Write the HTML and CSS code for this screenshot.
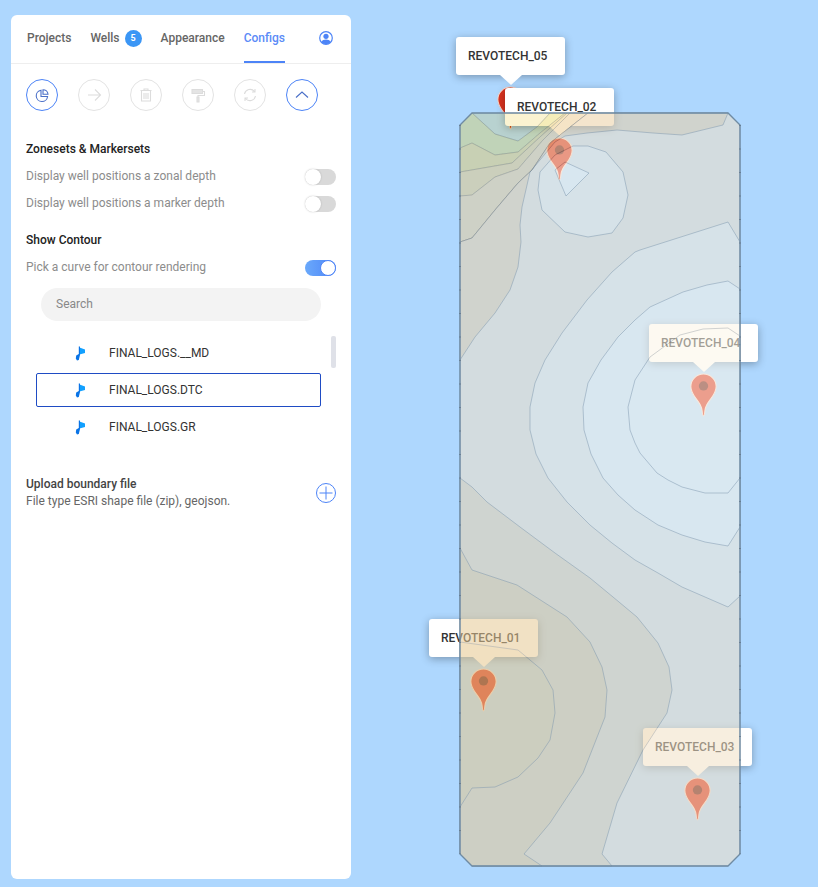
FILE: index.html
```html
<!DOCTYPE html>
<html lang="en">
<head>
    <meta charset="UTF-8">
    <meta name="viewport" content="width=device-width, initial-scale=1.0">
    <title>Well map configs</title>
    <link rel="stylesheet" href="styles.css">
</head>
<body>
    <div class="map">
        <!-- well markers sit under the contour layer, as on the real map -->
        <div class="well well-05">
            <div class="well-label">REVOTECH_05</div>
            <svg class="pin" viewBox="0 0 26 42"><path d="M13 1C6 1 .8 6.6 .8 13C.8 18 3.5 21.5 6 25C8.5 28.5 11 31 11.6 36C11.9 39 12.3 41.5 13 41.5C13.7 41.5 14.1 39 14.4 36C15 31 17.5 28.5 20 25C22.5 21.5 25.2 18 25.2 13C25.2 6.6 20 1 13 1Z"/><circle cx="13" cy="12.5" r="4.5"/></svg>
        </div>
        <div class="well well-02">
            <div class="well-label">REVOTECH_02</div>
            <svg class="pin" viewBox="0 0 26 42"><path d="M13 1C6 1 .8 6.6 .8 13C.8 18 3.5 21.5 6 25C8.5 28.5 11 31 11.6 36C11.9 39 12.3 41.5 13 41.5C13.7 41.5 14.1 39 14.4 36C15 31 17.5 28.5 20 25C22.5 21.5 25.2 18 25.2 13C25.2 6.6 20 1 13 1Z"/><circle cx="13" cy="12.5" r="4.5"/></svg>
        </div>
        <div class="well well-04">
            <div class="well-label">REVOTECH_04</div>
            <svg class="pin" viewBox="0 0 26 42"><path d="M13 1C6 1 .8 6.6 .8 13C.8 18 3.5 21.5 6 25C8.5 28.5 11 31 11.6 36C11.9 39 12.3 41.5 13 41.5C13.7 41.5 14.1 39 14.4 36C15 31 17.5 28.5 20 25C22.5 21.5 25.2 18 25.2 13C25.2 6.6 20 1 13 1Z"/><circle cx="13" cy="12.5" r="4.5"/></svg>
        </div>
        <div class="well well-01">
            <div class="well-label">REVOTECH_01</div>
            <svg class="pin" viewBox="0 0 26 42"><path d="M13 1C6 1 .8 6.6 .8 13C.8 18 3.5 21.5 6 25C8.5 28.5 11 31 11.6 36C11.9 39 12.3 41.5 13 41.5C13.7 41.5 14.1 39 14.4 36C15 31 17.5 28.5 20 25C22.5 21.5 25.2 18 25.2 13C25.2 6.6 20 1 13 1Z"/><circle cx="13" cy="12.5" r="4.5"/></svg>
        </div>
        <div class="well well-03">
            <div class="well-label">REVOTECH_03</div>
            <svg class="pin" viewBox="0 0 26 42"><path d="M13 1C6 1 .8 6.6 .8 13C.8 18 3.5 21.5 6 25C8.5 28.5 11 31 11.6 36C11.9 39 12.3 41.5 13 41.5C13.7 41.5 14.1 39 14.4 36C15 31 17.5 28.5 20 25C22.5 21.5 25.2 18 25.2 13C25.2 6.6 20 1 13 1Z"/><circle cx="13" cy="12.5" r="4.5"/></svg>
        </div>

        <svg class="contours" viewBox="0 0 818 887">
            <!-- top left bands fade out towards the edge of the colour scale -->
            <g class="contour-lines">
                <polygon fill="#e9bd00" fill-opacity=".18" points="472,113 495,134 518,141 537,127 550,113"/>
                <polygon fill="#e2cb36" fill-opacity=".35" points="460,125 472,113 495,134 518,141 537,127 550,113 565,113 540,133 518,152 495,155 472,143 460,148"/>
                <polygon fill="#ecc64f" fill-opacity=".42" points="460,148 472,143 495,155 518,152 540,133 565,113 567,113 540,137 512,163 483,168 460,172"/>
                <polygon fill="#ebc675" fill-opacity=".48" points="460,172 483,168 512,163 540,137 567,113 570,113 543,140 518,169 495,177 472,195 460,196"/>
                <polygon fill="#ebcc92" fill-opacity=".52" points="460,196 472,195 495,177 518,169 543,140 570,113 588,113 550,143 532,170 518,183 495,210 472,238 460,242"/>
            </g>
            <g class="contour-levels">
                <polygon fill="#f2e1c6" points="460,242 472,238 495,210 518,183 532,170 550,143 588,113 728,113 740,125 740,854 728,866 472,866 460,854"/>
                <polygon fill="#ecd0a6" points="460,242 472,238 495,210 518,183 532,170 550,143 588,113 728,113 723,125 682,135 653,133 617,130 587,133 565,136 555,142 530,172 522,207 520,225 521,242 518,267 510,290 495,313 475,337 460,360"/>
                <polygon fill="#f7ecd7" points="740,242 728,222 640,250 635,252 612,272 587,300 562,333 545,360 535,383 530,407 530,430 536,454 548,478 567,502 590,525 612,543 635,560 658,573 682,587 705,597 728,607 740,596"/>
                <polygon fill="#f7ecd7" points="573,146 588,146 606,152 623,172 628,195 623,218 612,233 588,237 565,232 542,210 538,190 540,172 555,155"/>
                <polygon fill="#fcf5e6" points="555,170 565,162 589,173 566,196"/>
                <polygon fill="#fcf5e6" points="740,289 728,281 707,285 683,292 650,307 635,320 618,337 601,360 588,383 583,407 584,430 591,454 603,478 618,495 635,510 658,525 682,535 705,542 728,546 740,527"/>
                <polygon fill="#fdf7e8" points="740,336 728,328 703,329 680,335 650,357 635,380 628,407 630,430 635,443 640,453 657,473 668,480 682,487 705,493 728,493 740,478"/>
                <polygon fill="#ebd3ab" points="460,478 472,487 487,502 520,527 555,553 590,578 613,597 637,617 658,643 669,667 672,690 667,713 643,750 617,803 602,854 612,866 472,866 460,854"/>
                <polygon fill="#e7c995" points="460,548 472,570 517,585 567,617 590,642 602,667 607,690 605,717 583,773 550,823 524,854 542,866 472,866 460,854"/>
                <polygon fill="#e6c88d" points="460,642 518,650 542,670 553,690 555,713 550,740 538,758 518,777 495,787 472,788 460,807"/>
            </g>
            <polygon class="boundary" points="472,113 728,113 740,125 740,854 728,866 472,866 460,854 460,125"/>
            <path class="boundary-ticks" d="M460 125V854M740 125V854"/>
        </svg>
    </div>

    <div class="panel">
        <div class="tabs">
            <span class="tab">Projects</span>
            <span class="tab">Wells <span class="badge">5</span></span>
            <span class="tab">Appearance</span>
            <span class="tab tab-active">Configs</span>
            <svg class="user-icon" viewBox="0 0 14 14">
                <circle cx="7" cy="7" r="6.3" fill="none" stroke="#4d84f7" stroke-width="1.2"/>
                <circle cx="7" cy="5.3" r="2.6" fill="#4d84f7"/>
                <path d="M2.4 11.2C3.2 9.2 5 8.6 7 8.6S10.8 9.2 11.6 11.2C10.4 12.4 8.8 13 7 13S3.6 12.4 2.4 11.2Z" fill="#4d84f7"/>
            </svg>
        </div>

        <div class="actions">
            <button class="action action-on">
                <svg viewBox="0 0 16 16"><path d="M13.6 9.5A5.7 5.7 0 1 1 7 3.2V9.5Z"/><path d="M9 2.7A5 5 0 0 1 14 7.3H9Z"/></svg>
            </button>
            <button class="action">
                <svg viewBox="0 0 16 16"><path d="M2 8H14M9 2.5L14.5 8L9 13.5"/></svg>
            </button>
            <button class="action">
                <svg viewBox="0 0 16 16"><path d="M2.5 3.5H13.5M6 3.5V2H10V3.5M3.5 3.5V14H12.5V3.5M6 6V12M8 6V12M10 6V12"/></svg>
            </button>
            <button class="action">
                <svg viewBox="0 0 16 16"><path class="solid" d="M2 2.5H12.5V6.5H2Z"/><path d="M12.5 4.5H14.5V8.5H8V10"/><path class="solid" d="M7 10H9V15H7Z"/></svg>
            </button>
            <button class="action">
                <svg viewBox="0 0 16 16"><path d="M2.5 7A5.7 5.7 0 0 1 12.5 4.5M13.5 9A5.7 5.7 0 0 1 3.5 11.5M13 2V5H10M3 14V11H6"/></svg>
            </button>
            <button class="action action-on">
                <svg viewBox="0 0 16 16"><path d="M2 10.5L8 5L14 10.5"/></svg>
            </button>
        </div>

        <div class="section-title">Zonesets &amp; Markersets</div>
        <div class="option">
            <span>Display well positions a zonal depth</span>
            <span class="toggle"></span>
        </div>
        <div class="option">
            <span>Display well positions a marker depth</span>
            <span class="toggle"></span>
        </div>

        <div class="section-title section-contour">Show Contour</div>
        <div class="option">
            <span>Pick a curve for contour rendering</span>
            <span class="toggle toggle-on"></span>
        </div>

        <div class="search">Search</div>

        <div class="curve-list">
            <div class="curve">
                <svg class="flag" viewBox="0 0 10 15"><path class="flag-top" d="M4.5 1.5L10 3.5V7L4.5 8.5Z"/><path class="flag-pole" d="M3.8 .5H5V9L3.8 14L2 14.5L.8 12.5L1.2 9.5L3.8 8Z"/></svg>
                <span>FINAL_LOGS.__MD</span>
            </div>
            <div class="curve curve-selected">
                <svg class="flag" viewBox="0 0 10 15"><path class="flag-top" d="M4.5 1.5L10 3.5V7L4.5 8.5Z"/><path class="flag-pole" d="M3.8 .5H5V9L3.8 14L2 14.5L.8 12.5L1.2 9.5L3.8 8Z"/></svg>
                <span>FINAL_LOGS.DTC</span>
            </div>
            <div class="curve">
                <svg class="flag" viewBox="0 0 10 15"><path class="flag-top" d="M4.5 1.5L10 3.5V7L4.5 8.5Z"/><path class="flag-pole" d="M3.8 .5H5V9L3.8 14L2 14.5L.8 12.5L1.2 9.5L3.8 8Z"/></svg>
                <span>FINAL_LOGS.GR</span>
            </div>
            <div class="scroll-thumb"></div>
        </div>

        <div class="upload">
            <div>
                <div class="upload-title">Upload boundary file</div>
                <div class="upload-note">File type ESRI shape file (zip), geojson.</div>
            </div>
            <svg class="plus" viewBox="0 0 20 20"><circle cx="10" cy="10" r="9.5"/><path d="M10 3.5V16.5M3.5 10H16.5"/></svg>
        </div>
    </div>
</body>
</html>
```

FILE: styles.css
```css
* {
    box-sizing: border-box;
}
html, body {
    height: 100%;
}
body {
    margin: 0;
    padding: 15px 0 8px 11px;
    background-color: #aed7fe;
    font-family: Roboto, "Liberation Sans", sans-serif;
    font-size: 12px;
    overflow: hidden;
}

/* map */
.map {
    position: absolute;
    top: 0;
    left: 0;
    width: 818px;
    height: 887px;
}
.contours {
    position: absolute;
    z-index: 2;
    top: 0;
    left: 0;
    width: 818px;
    height: 887px;
}
.contour-lines polygon {
    stroke: #58646e;
    stroke-opacity: .18;
    stroke-width: 1;
    stroke-linejoin: round;
}
.contour-levels {
    opacity: .55;
}
.contour-levels polygon {
    stroke: #58646e;
    stroke-opacity: .5;
    stroke-width: 1;
    stroke-linejoin: round;
}
.boundary {
    fill: none;
    stroke: #6f8ba3;
    stroke-width: 1.4;
}
.boundary-ticks {
    fill: none;
    stroke: #5f7488;
    stroke-opacity: .7;
    stroke-width: 2;
    stroke-dasharray: 1 22.5;
}
.well {
    position: absolute;
    display: flex;
    flex-direction: column;
    align-items: center;
    width: 109px;
}
.well-05 { left: 456px; top: 37px; }
.well-02 { left: 505px; top: 88px; }
.well-04 { left: 649px; top: 324px; }
.well-01 { left: 429px; top: 619px; }
.well-03 { left: 643px; top: 728px; }
.well-label {
    position: relative;
    z-index: 1;
    width: 109px;
    height: 38px;
    padding: 0 12px;
    line-height: 38px;
    font-weight: 500;
    color: #333;
    background-color: #fff;
    border-radius: 3px;
    box-shadow: 0 2px 8px rgba(0, 0, 0, .3);
}
.well-label::after {
    content: "";
    position: absolute;
    left: 44px;
    top: 38px;
    border-left: 11px solid transparent;
    border-right: 11px solid transparent;
    border-top: 10px solid #fff;
}
.pin {
    flex: none;
    width: 27px;
    height: 43.5px;
    margin-top: 11px;
}
.pin path {
    fill: #d8321f;
    stroke: #f6d9cf;
    stroke-width: 1;
}
.pin circle {
    fill: #6b1008;
}

/* panel */
.panel {
    position: relative;
    z-index: 3;
    width: 340px;
    height: 864px;
    padding: 0 15px;
    background-color: #fff;
    border-radius: 6px;
}
.tabs {
    display: flex;
    align-items: stretch;
    gap: 19px;
    height: 49px;
    margin: 0 -15px;
    padding: 0 15px 0 16px;
    border-bottom: 1px solid #eeeeee;
    font-weight: 500;
    color: #666;
}
.tab {
    display: flex;
    align-items: center;
    gap: 5px;
    height: 49px;
    padding-bottom: 3px;
}
.tab-active {
    color: #5b8bf7;
    border-bottom: 2px solid #4d84f7;
    height: 48px;
    padding-bottom: 1px;
}
.badge {
    display: flex;
    align-items: center;
    justify-content: center;
    width: 17px;
    height: 17px;
    border-radius: 50%;
    background-color: #3b96f5;
    color: #fff;
    font-size: 9px;
    font-weight: 700;
}
.user-icon {
    width: 14px;
    height: 14px;
    margin: 16px 3px 0 auto;
}
.actions {
    display: flex;
    gap: 20px;
    margin: 15px 0 30px;
}
.action {
    display: flex;
    align-items: center;
    justify-content: center;
    width: 32px;
    height: 32px;
    padding: 0;
    background: none;
    border: 1px solid #e3e3e3;
    border-radius: 50%;
}
.action svg {
    width: 16px;
    height: 16px;
    fill: none;
    stroke: #dcdcdc;
    stroke-width: 1.1;
}
.action .solid {
    fill: #e4e4e4;
}
.action-on {
    border-color: #4d84f7;
}
.action-on svg {
    stroke: #4a6fc8;
}
.section-title {
    height: 16px;
    line-height: 16px;
    margin-bottom: 12px;
    font-weight: 500;
    color: #222;
}
.section-contour {
    margin-top: 20px;
}
.option {
    display: flex;
    justify-content: space-between;
    height: 16px;
    line-height: 14px;
    margin-bottom: 11px;
    color: #8c8c8c;
}
.toggle {
    position: relative;
    width: 31px;
    height: 16px;
    border-radius: 8px;
    background-color: #d9d9d9;
}
.toggle::after {
    content: "";
    position: absolute;
    left: 0;
    top: 0;
    width: 16px;
    height: 16px;
    border-radius: 50%;
    background-color: #fff;
    box-shadow: 0 0 2px rgba(0, 0, 0, .2);
}
.toggle-on {
    background: linear-gradient(to right, #6aa9fb, #4d84f7);
}
.toggle-on::after {
    left: 15px;
    width: 14px;
    height: 14px;
    border: 1px solid #4d84f7;
    box-shadow: none;
}
.search {
    width: 280px;
    height: 33px;
    margin: 12px 0 15px 15px;
    padding-left: 15px;
    line-height: 32px;
    border-radius: 17px;
    background-color: #f3f3f3;
    color: #888;
}
.curve-list {
    position: relative;
    display: flex;
    flex-direction: column;
    gap: 3px;
    width: 285px;
    margin-left: 10px;
}
.curve {
    display: flex;
    align-items: center;
    height: 34px;
    padding-left: 38px;
    border: 1px solid transparent;
    border-radius: 2px;
    color: #333;
}
.curve-selected {
    border-color: #1f4cc4;
}
.flag {
    width: 10px;
    height: 15px;
    margin-right: 24px;
}
.flag-top {
    fill: #12a0ff;
}
.flag-pole {
    fill: #0a74e6;
}
.scroll-thumb {
    position: absolute;
    top: 0;
    right: -15px;
    width: 5px;
    height: 32px;
    border-radius: 2px;
    background-color: #dfe1e8;
}
.upload {
    display: flex;
    align-items: center;
    justify-content: space-between;
    margin-top: 32px;
}
.upload-title {
    height: 17px;
    line-height: 16px;
    font-weight: 500;
    color: #444;
}
.upload-note {
    height: 17px;
    line-height: 16px;
    color: #666;
}
.plus {
    width: 20px;
    height: 20px;
    fill: none;
    stroke: #4d84f7;
    stroke-width: 1;
}
```
